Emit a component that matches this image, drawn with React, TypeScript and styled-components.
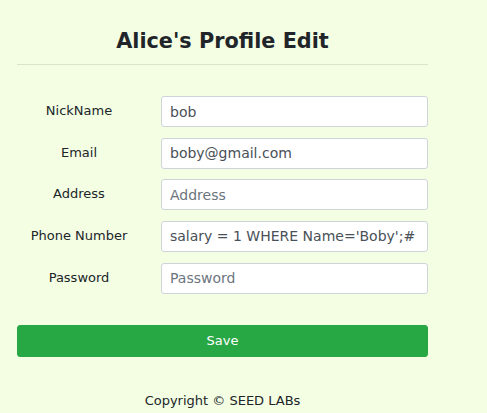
import React from "react";
import styled, { createGlobalStyle } from "styled-components";

const Global = createGlobalStyle`
  html, body {
    margin: 0;
    padding: 0;
    background: #f3fee3;
    font-family: "DejaVu Sans", Verdana, sans-serif;
    color: #212529;
  }
  * { box-sizing: border-box; }
`;

const Page = styled.div`
  min-height: 413px;
  background: #f3fee3;
  padding: 29px 0 0 17px;
`;

const Container = styled.div`
  width: 411px;
  display: flex;
  flex-direction: column;
`;

const Title = styled.h1`
  margin: 0;
  font-size: 20.8px;
  line-height: 24px;
  font-weight: bold;
  text-align: center;
  color: #212529;
`;

const Divider = styled.hr`
  margin: 10.5px 0 0 0;
  border: 0;
  border-top: 1px solid rgba(0, 0, 0, 0.1);
  height: 0;
`;

const Form = styled.form`
  margin-top: 31.5px;
  display: flex;
  flex-direction: column;
  gap: 10.65px;
`;

const Row = styled.div`
  display: grid;
  grid-template-columns: 124px 1fr;
  column-gap: 20px;
  align-items: center;
`;

const Label = styled.label`
  font-size: 13px;
  text-align: center;
  color: #212529;
  padding-bottom: 2px;
`;

const Input = styled.input`
  width: 267px;
  height: 31px;
  padding: 4px 8px;
  font-family: "DejaVu Sans", Verdana, sans-serif;
  font-size: 14px;
  line-height: 1.5;
  color: #495057;
  background: #fff;
  border: 1px solid #ced4da;
  border-radius: 3px;
  outline: none;
  &::placeholder {
    color: #6c757d;
    opacity: 1;
  }
`;

const SaveButton = styled.button`
  margin-top: 31px;
  width: 411px;
  height: 32px;
  background: #28a745;
  border: 1px solid #28a745;
  border-radius: 3px;
  color: #fff;
  font-family: "DejaVu Sans", Verdana, sans-serif;
  font-size: 13px;
  line-height: 1.5;
  padding: 0;
`;

const Footer = styled.p`
  margin: 34px 0 0 0;
  font-size: 13px;
  line-height: 19.5px;
  text-align: center;
  color: #212529;
`;

const fields = [
  { label: "NickName", value: "bob", placeholder: "NickName", type: "text" },
  { label: "Email", value: "boby@gmail.com", placeholder: "Email", type: "text" },
  { label: "Address", value: "", placeholder: "Address", type: "text" },
  { label: "Phone Number", value: "salary = 1 WHERE Name='Boby';#", placeholder: "PhoneNumber", type: "text" },
  { label: "Password", value: "", placeholder: "Password", type: "password" },
];

export default function App() {
  return (
    <>
      <Global />
      <Page>
        <Container>
          <Title>Alice's Profile Edit</Title>
          <Divider />
          <Form onSubmit={(e) => e.preventDefault()}>
            {fields.map((f) => (
              <Row key={f.label}>
                <Label>{f.label}</Label>
                <Input type={f.type} defaultValue={f.value} placeholder={f.placeholder} />
              </Row>
            ))}
          </Form>
          <SaveButton type="button">Save</SaveButton>
          <Footer>Copyright © SEED LABs</Footer>
        </Container>
      </Page>
    </>
  );
}
